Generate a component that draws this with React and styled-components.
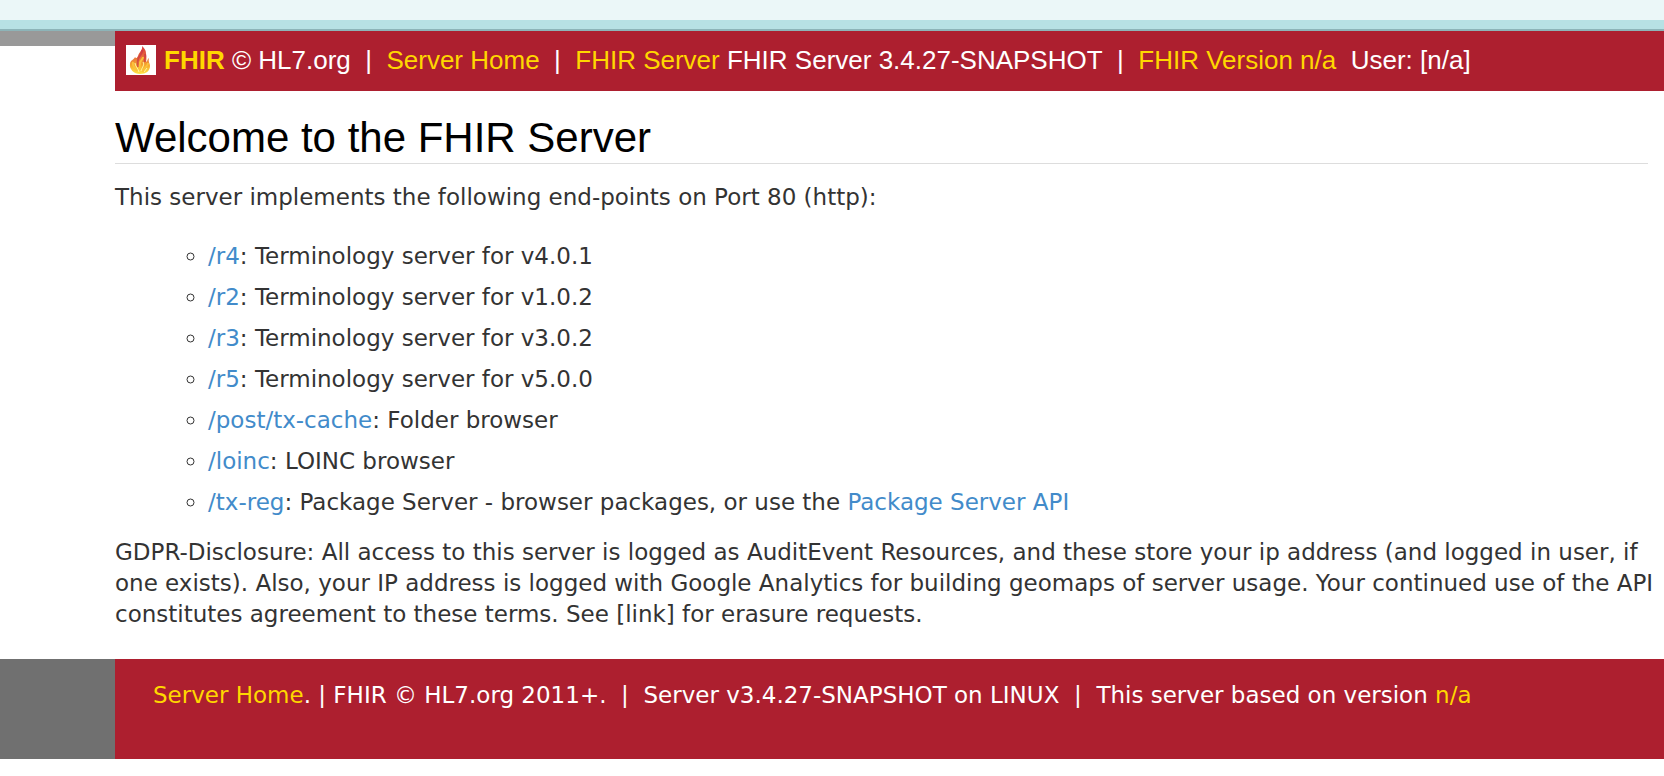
import React from "react";
import styled, { createGlobalStyle } from "styled-components";

const GlobalStyle = createGlobalStyle`
  * { box-sizing: border-box; }
  body {
    margin: 0;
    background: #fff;
    color: #333;
    font: 23px/31px Verdana, "DejaVu Sans", sans-serif;
  }
`;

const TopStrip = styled.div`
  height: 31px;
  background: #b7e1e4;
  border-top: 20px solid #ebf7f8;
  border-bottom: 2px solid #8db4b8;
`;

const Band = styled.div`
  display: grid;
  grid-template-columns: 115px minmax(0, 1fr);
  align-items: ${(p) => p.$align || "stretch"};
`;

const Gutter = styled.div`
  min-height: 15px;
  background: ${(p) => p.$color};
`;

const HeaderBar = styled.header`
  display: flex;
  align-items: flex-start;
  gap: 8px;
  min-height: 60px;
  padding: 14px 11px;
  background: #ad1f2f;
  color: #fff;
  font: 26px/30px "Liberation Sans", Arial, sans-serif;
`;

const Logo = styled.svg`
  flex: none;
  width: 30px;
  height: 30px;
  background: #fff;
`;

const BarText = styled.div`
  min-width: 0;
`;

const BarLink = styled.a`
  color: #ffd700;
  font-weight: ${(p) => (p.$bold ? 700 : 400)};
  text-decoration: none;
`;

const Main = styled.main`
  padding: 24px 0 29px 115px;
`;

const Title = styled.h1`
  margin: 0 16px 18px 0;
  padding-bottom: 2px;
  border-bottom: 1px solid #ddd;
  color: #000;
  font: 400 42px/46px "Liberation Sans", Arial, sans-serif;
`;

const Paragraph = styled.p`
  margin: 0;
`;

const EndpointList = styled.ul`
  display: grid;
  gap: 10px;
  margin: 28px 0 19px;
  padding-left: 93px;
  list-style: circle;
`;

const Link = styled.a`
  color: #428bca;
  text-decoration: none;
`;

const FooterBar = styled.footer`
  min-height: 100px;
  padding: 21px 38px;
  background: #ad1f2f;
  color: #fff;
`;

const endpoints = [
  ["/r4", "Terminology server for v4.0.1"],
  ["/r2", "Terminology server for v1.0.2"],
  ["/r3", "Terminology server for v3.0.2"],
  ["/r5", "Terminology server for v5.0.0"],
  ["/post/tx-cache", "Folder browser"],
  ["/loinc", "LOINC browser"],
  [
    "/tx-reg",
    <>
      Package Server - browser packages, or use the <Link href="#api">Package Server API</Link>
    </>,
  ],
];

const Separator = () => <>{"\u00a0 | \u00a0"}</>;

const FlameLogo = () => (
  <Logo viewBox="0 0 30 30" aria-hidden="true">
    <defs>
      <linearGradient id="flame" x1="0" y1="0" x2="0" y2="1">
        <stop offset="0" stopColor="#d9343c" />
        <stop offset="0.4" stopColor="#e8703c" />
        <stop offset="0.7" stopColor="#f6a82c" />
        <stop offset="1" stopColor="#ffe84a" />
      </linearGradient>
    </defs>
    <path
      d="M16 1C17 5 13 7 12 11C11 13 10 14 9 12C8 15 4 15 4 19C3 24 8 29 14 29C20 29 24 26 24 21C24 18 22 17 23 13C21 14 22 16 20 17C21 13 20 11 20 8C20 5 18 3 16 1Z"
      fill="url(#flame)"
    />
    <path d="M16 5C17 9 12 11 12 15C11 18 12 20 12 22M19 9C20 12 18 14 19 17" fill="none" stroke="#cb3546" strokeWidth="2" opacity="0.7" />
    <path
      d="M17 12C17 15 14 15 14 19C13 22 14 23 14 25M7 17C6 21 9 23 11 26M22 18C22 22 18 22 17 27"
      fill="none"
      stroke="#fbc13a"
      strokeWidth="2"
    />
    <path d="M17 17C19 20 16 22 15 26M9 18C9 21 12 23 13 27M21 23L18 27" fill="none" stroke="#fff6a0" strokeWidth="1" />
  </Logo>
);

export default function App() {
  return (
    <>
      <GlobalStyle />
      <TopStrip />
      <Band $align="start">
        <Gutter $color="#999" />
        <HeaderBar>
          <FlameLogo />
          <BarText>
            <BarLink href="#fhir" $bold>FHIR</BarLink> © HL7.org
            <Separator />
            <BarLink href="#home">Server Home</BarLink>
            <Separator />
            <BarLink href="#server">FHIR Server</BarLink> FHIR Server 3.4.27-SNAPSHOT
            <Separator />
            <BarLink href="#version">FHIR Version n/a</BarLink>
            {"\u00a0 "}User: [n/a]
          </BarText>
        </HeaderBar>
      </Band>
      <Main>
        <Title>Welcome to the FHIR Server</Title>
        <Paragraph>This server implements the following end-points on Port 80 (http):</Paragraph>
        <EndpointList>
          {endpoints.map(([path, description]) => (
            <li key={path}>
              <Link href={path}>{path}</Link>: {description}
            </li>
          ))}
        </EndpointList>
        <Paragraph>
          GDPR-Disclosure: All access to this server is logged as AuditEvent Resources, and these store your ip
          address (and logged in user, if one exists). Also, your IP address is logged with Google Analytics for
          building geomaps of server usage. Your continued use of the API constitutes agreement to these terms. See
          [link] for erasure requests.
        </Paragraph>
      </Main>
      <Band>
        <Gutter $color="#707070" />
        <FooterBar>
          <BarLink href="#home">Server Home</BarLink>. | FHIR © HL7.org 2011+.
          <Separator />
          Server v3.4.27-SNAPSHOT on LINUX
          <Separator />
          This server based on version <BarLink href="#version">n/a</BarLink>
        </FooterBar>
      </Band>
    </>
  );
}
